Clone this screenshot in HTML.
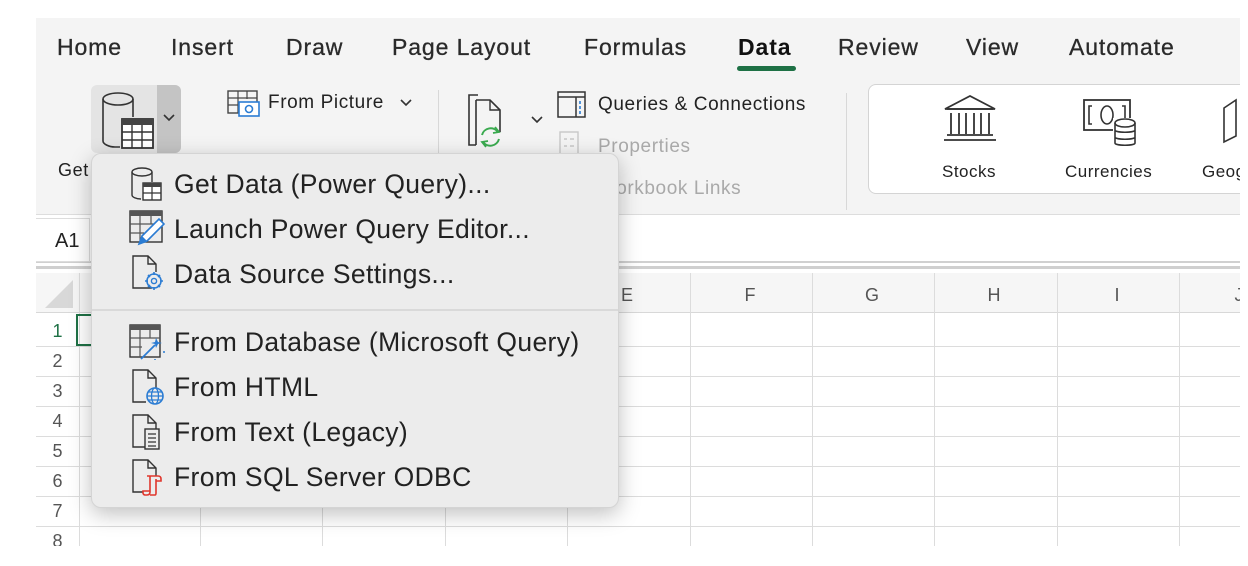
<!DOCTYPE html>
<html><head><meta charset="utf-8"><style>
*{margin:0;padding:0;box-sizing:border-box}
body{width:1248px;height:566px;background:#fff;position:relative;overflow:hidden;font-family:"Liberation Sans",Arial,sans-serif;color:#222}
.abs{position:absolute}
#ribbon{left:36px;top:18px;width:1204px;height:197px;background:#f4f4f4;border-bottom:1px solid #ddd;overflow:hidden}
.tab{position:absolute;top:16px;font-size:23px;color:#2a2a2a;letter-spacing:0.9px;-webkit-text-stroke:0.3px #2a2a2a}
.rt{position:absolute;font-size:19px;color:#222;letter-spacing:0.6px}
#fbar{left:36px;top:216px;width:1204px;height:47px;background:#fff;border-bottom:2px solid #d0d0d0}
#grid{left:36px;top:266px;width:1204px;height:280px;background:#fff;border-top:3px solid #cfcfcf;overflow:hidden}
.col{position:absolute;top:4px;height:276px;border-left:1px solid #dcdcdc}
.row{position:absolute;left:0;width:1212px;border-top:1px solid #dcdcdc}
.ch{position:absolute;top:16px;font-size:18px;color:#555;text-align:center;width:120px}
.rn{position:absolute;left:0;width:43px;text-align:center;font-size:18px;color:#555}
#menu{left:91px;top:153px;width:528px;height:355px;background:#ececec;border-radius:10px;box-shadow:0 6px 22px rgba(0,0,0,.25);border:1px solid #d4d4d4}
.mi{position:absolute;left:82px;font-size:26.5px;color:#222;letter-spacing:0.35px}
.ic{position:absolute;left:38px}
</style></head><body>
<div id="ribbon" class="abs">
 <div class="tab" style="left:21px">Home</div>
 <div class="tab" style="left:135px">Insert</div>
 <div class="tab" style="left:250px">Draw</div>
 <div class="tab" style="left:356px">Page Layout</div>
 <div class="tab" style="left:548px">Formulas</div>
 <div class="tab" style="left:702px;font-weight:bold;color:#111;-webkit-text-stroke:0">Data</div>
 <div class="abs" style="left:701px;top:48px;width:59px;height:5px;background:#1e7145;border-radius:3px"></div>
 <div class="tab" style="left:802px">Review</div>
 <div class="tab" style="left:930px">View</div>
 <div class="tab" style="left:1033px">Automate</div>
 <div class="abs" style="left:55px;top:67px;width:90px;height:68px;background:#e4e4e4;border-radius:6px"></div>
 <div class="abs" style="left:121px;top:67px;width:24px;height:68px;background:#c4c4c4;border-radius:0 6px 6px 0"></div>
 <svg class="abs" style="left:64px;top:72px" width="60" height="62"><ellipse cx="18" cy="9" rx="15" ry="6" fill="none" stroke="#333" stroke-width="1.6"/><path d="M3 9v42c0 3 6 6 12 6h5M33 9v18" fill="none" stroke="#333" stroke-width="1.6"/><rect x="22" y="29" width="31" height="29" fill="#fff" stroke="#333" stroke-width="1.8"/><rect x="22" y="29" width="31" height="6" fill="#444"/><path d="M22 42h31M22 50h31M32 35v23M42 35v23" stroke="#333" stroke-width="1.4"/></svg>
 <svg class="abs" style="left:127px;top:96px" width="12" height="8"><path d="M1 1l5 5 5-5" fill="none" stroke="#333" stroke-width="1.6"/></svg>
 <div class="rt" style="left:22px;top:142px;font-size:18px">Get</div>
 <svg class="abs" style="left:191px;top:72px" width="34" height="28"><rect x="1" y="1" width="29" height="22" fill="none" stroke="#444" stroke-width="1.4"/><path d="M1 8h29M1 15h12M11 1v22M20 1v8" stroke="#444" stroke-width="1.2"/><rect x="12" y="12" width="20" height="14" fill="#fff" stroke="#2b7cd3" stroke-width="1.6"/><circle cx="22" cy="19" r="3.5" fill="none" stroke="#2b7cd3" stroke-width="1.6"/></svg>
 <div class="rt" style="left:232px;top:74px">From Picture</div>
 <svg class="abs" style="left:364px;top:81px" width="12" height="8"><path d="M1 1l5 5 5-5" fill="none" stroke="#333" stroke-width="1.6"/></svg>
 <div class="abs" style="left:402px;top:72px;width:1px;height:120px;background:#d8d8d8"></div>
 <svg class="abs" style="left:432px;top:76px" width="50" height="58"><path d="M10 1h-9v50h7" fill="none" stroke="#333" stroke-width="1.6"/><path d="M8 6h14l10 10v22M8 6v45" fill="none" stroke="#333" stroke-width="1.6"/><path d="M22 6v10h10" fill="none" stroke="#333" stroke-width="1.4"/><path d="M30 38a9 9 0 0 0-16 3M15 48a9 9 0 0 0 16-3" fill="none" stroke="#3aaa4f" stroke-width="2"/><path d="M27 33l4 5-6 1M18 53l-4-5 6-1" fill="none" stroke="#3aaa4f" stroke-width="1.8"/></svg>
 <svg class="abs" style="left:495px;top:98px" width="12" height="8"><path d="M1 1l5 5 5-5" fill="none" stroke="#333" stroke-width="1.6"/></svg>
 <svg class="abs" style="left:521px;top:73px" width="30" height="28"><rect x="1" y="1" width="27" height="25" fill="none" stroke="#333" stroke-width="1.5"/><path d="M1 6h27M19 6v20" stroke="#333" stroke-width="1.5"/><path d="M23 10v3M23 15v3M23 20v3" stroke="#2b7cd3" stroke-width="1.6"/></svg>
 <div class="rt" style="left:562px;top:76px">Queries &amp; Connections</div>
 <svg class="abs" style="left:523px;top:113px" width="22" height="28"><rect x="1" y="1" width="18" height="25" fill="none" stroke="#c8c8c8" stroke-width="1.4"/><path d="M5 8h3M11 8h4M5 15h3M11 15h4" stroke="#c8c8c8" stroke-width="1.4"/></svg>
 <div class="rt" style="left:562px;top:118px;color:#a9a9a9">Properties</div>
 <div class="rt" style="left:562px;top:160px;color:#a9a9a9">Workbook Links</div>
 <div class="abs" style="left:810px;top:75px;width:1px;height:117px;background:#d8d8d8"></div>
 <div class="abs" style="left:832px;top:66px;width:400px;height:110px;background:#fff;border:1px solid #d4d4d4;border-radius:8px"></div>
 <svg class="abs" style="left:906px;top:76px" width="56" height="48"><path d="M3 15L28 2l25 13z" fill="none" stroke="#333" stroke-width="1.8"/><path d="M5 15h46M9 19v21M17 19v21M24 19v21M32 19v21M39 19v21M47 19v21M5 41h46M2 46h52" stroke="#333" stroke-width="1.8"/></svg>
 <div class="rt" style="left:906px;top:144px;font-size:17px;letter-spacing:0.5px">Stocks</div>
 <svg class="abs" style="left:1046px;top:80px" width="58" height="54"><rect x="2" y="2" width="46" height="30" fill="none" stroke="#333" stroke-width="1.8"/><path d="M10 8h-3v18h3M40 8h3v18h-3" fill="none" stroke="#333" stroke-width="1.6"/><ellipse cx="25" cy="17" rx="6" ry="9" fill="none" stroke="#333" stroke-width="1.6"/><rect x="31" y="20" width="26" height="32" fill="#fff"/><ellipse cx="43" cy="25" rx="10" ry="4" fill="#fff" stroke="#333" stroke-width="1.6"/><path d="M33 25v20c0 3 20 3 20 0V25M33 32c0 3 20 3 20 0M33 39c0 3 20 3 20 0" fill="none" stroke="#333" stroke-width="1.6"/></svg>
 <div class="rt" style="left:1029px;top:144px;font-size:17px;letter-spacing:0.5px">Currencies</div>
 <svg class="abs" style="left:1186px;top:80px" width="30" height="46"><path d="M2 10L14 2v36L2 44z" fill="none" stroke="#333" stroke-width="1.6"/></svg>
 <div class="rt" style="left:1166px;top:144px;font-size:17px;letter-spacing:0.5px">Geog</div>
</div>
<div id="fbar" class="abs">
 <div class="abs" style="left:0;top:2px;width:54px;height:44px;background:#fff;border:1px solid #ddd;border-left:none"></div>
 <div class="rt" style="left:19px;top:14px;font-size:20px;letter-spacing:0">A1</div>
</div>
<div id="grid" class="abs">
 <div class="abs" style="left:0;top:4px;width:1212px;height:40px;background:#f6f6f6;border-bottom:1px solid #d8d8d8"></div>
 <svg class="abs" style="left:7px;top:9px" width="32" height="32"><path d="M30 2v28H2z" fill="#d8d8d8"/></svg>
 <div class="col" style="left:43px"></div><div class="col" style="left:164px"></div><div class="col" style="left:286px"></div><div class="col" style="left:409px"></div><div class="col" style="left:531px"></div><div class="col" style="left:654px"></div><div class="col" style="left:776px"></div><div class="col" style="left:898px"></div><div class="col" style="left:1021px"></div><div class="col" style="left:1143px"></div>
 <div class="ch" style="left:531px">E</div><div class="ch" style="left:654px">F</div><div class="ch" style="left:776px">G</div><div class="ch" style="left:898px">H</div><div class="ch" style="left:1021px">I</div><div class="ch" style="left:1143px">J</div>
 <div class="row" style="top:77px"></div><div class="row" style="top:107px"></div><div class="row" style="top:137px"></div><div class="row" style="top:167px"></div><div class="row" style="top:197px"></div><div class="row" style="top:227px"></div><div class="row" style="top:257px"></div>
 <div class="rn" style="top:52px;color:#1e7145">1</div><div class="rn" style="top:82px">2</div><div class="rn" style="top:112px">3</div><div class="rn" style="top:142px">4</div><div class="rn" style="top:172px">5</div><div class="rn" style="top:202px">6</div><div class="rn" style="top:232px">7</div><div class="rn" style="top:262px">8</div>
 <div class="abs" style="left:40px;top:45px;width:20px;height:32px;border:2px solid #1e7145;border-right:none"></div>
</div>
<div class="abs" style="left:0;top:546px;width:1248px;height:20px;background:#fff"></div>
<div id="menu" class="abs">
 <svg class="ic" style="top:12px" width="36" height="36"><ellipse cx="12" cy="6" rx="10" ry="4" fill="none" stroke="#333" stroke-width="1.4"/><path d="M2 6v23c0 2 4 4 9 4M22 6v10" fill="none" stroke="#333" stroke-width="1.4"/><rect x="13" y="17" width="18" height="17" fill="#fff" stroke="#333" stroke-width="1.4"/><rect x="13" y="17" width="18" height="4" fill="#444"/><path d="M13 27h18M22 21v13" stroke="#333" stroke-width="1.2"/></svg>
 <div class="mi" style="top:15px">Get Data (Power Query)...</div>
 <svg class="ic" style="top:56px;left:37px" width="38" height="36"><rect x="1" y="1" width="32" height="31" fill="none" stroke="#333" stroke-width="1.4"/><rect x="1" y="1" width="32" height="5" fill="#555"/><path d="M1 14h32M1 23h14M11 6v26M22 6v8" stroke="#555" stroke-width="1.2"/><path d="M10 34l3-8 17-17 5 5-17 17z" fill="#fff" stroke="#2b7cd3" stroke-width="1.6"/><path d="M10 34l3-8 5 5z" fill="#2b7cd3"/></svg>
 <div class="mi" style="top:60px">Launch Power Query Editor...</div>
 <svg class="ic" style="top:100px" width="36" height="38"><path d="M22 34H3V2h15l8 8v8M18 2v8h8" fill="none" stroke="#333" stroke-width="1.4"/><circle cx="24" cy="27" r="7" fill="#ececec" stroke="#2b7cd3" stroke-width="1.6"/><circle cx="24" cy="27" r="2.6" fill="none" stroke="#2b7cd3" stroke-width="1.4"/><path d="M24 18v3M24 33v3M15 27h3M30 27h3M18 21l2 2M28 31l2 2M30 21l-2 2M18 33l2-2" stroke="#2b7cd3" stroke-width="1.6"/></svg>
 <div class="mi" style="top:105px">Data Source Settings...</div>
 <div class="abs" style="left:0;top:155px;width:526px;height:2px;background:#d9d9d9"></div>
 <svg class="ic" style="top:170px;left:37px" width="38" height="36"><rect x="1" y="1" width="30" height="32" fill="none" stroke="#333" stroke-width="1.4"/><rect x="1" y="1" width="30" height="5" fill="#555"/><path d="M1 14h30M1 23h12M11 6v27M21 6v8" stroke="#555" stroke-width="1.2"/><path d="M12 35l14-14" stroke="#2b7cd3" stroke-width="1.8"/><path d="M27 14l2 4 4 1-4 1-2 4-1-4-4-1 4-1z" fill="#2b7cd3"/><circle cx="35" cy="28" r="1" fill="#2b7cd3"/><circle cx="26" cy="36" r="1" fill="#2b7cd3"/></svg>
 <div class="mi" style="top:173px">From Database (Microsoft Query)</div>
 <svg class="ic" style="top:214px" width="36" height="38"><path d="M16 34H3V2h15l8 8v10M18 2v8h8" fill="none" stroke="#333" stroke-width="1.4"/><circle cx="25" cy="28" r="8" fill="#ececec" stroke="#2b7cd3" stroke-width="1.6"/><ellipse cx="25" cy="28" rx="3.5" ry="8" fill="none" stroke="#2b7cd3" stroke-width="1.3"/><path d="M17 28h16M18.5 24h13M18.5 32h13" stroke="#2b7cd3" stroke-width="1.2"/></svg>
 <div class="mi" style="top:218px">From HTML</div>
 <svg class="ic" style="top:259px" width="36" height="38"><path d="M16 34H3V2h15l8 8v8M18 2v8h8" fill="none" stroke="#333" stroke-width="1.4"/><rect x="15" y="16" width="14" height="20" fill="#ececec" stroke="#333" stroke-width="1.4"/><path d="M18 21h8M18 25h8M18 29h8M18 33h8" stroke="#333" stroke-width="1.2"/></svg>
 <div class="mi" style="top:263px">From Text (Legacy)</div>
 <svg class="ic" style="top:304px" width="36" height="40"><path d="M16 34H3V2h15l8 8v8M18 2v8h8" fill="none" stroke="#333" stroke-width="1.4"/><path d="M17 18h11c2 0 3 1 3 3v2h-5M20 18v16c0 2-1 3-3 3h-2c-1 0-2-1-2-2v-2h7M20 37h5c1 0 1-1 1-2V21" fill="#ececec" stroke="#e0362c" stroke-width="1.6"/></svg>
 <div class="mi" style="top:308px">From SQL Server ODBC</div>
</div>
</body></html>
